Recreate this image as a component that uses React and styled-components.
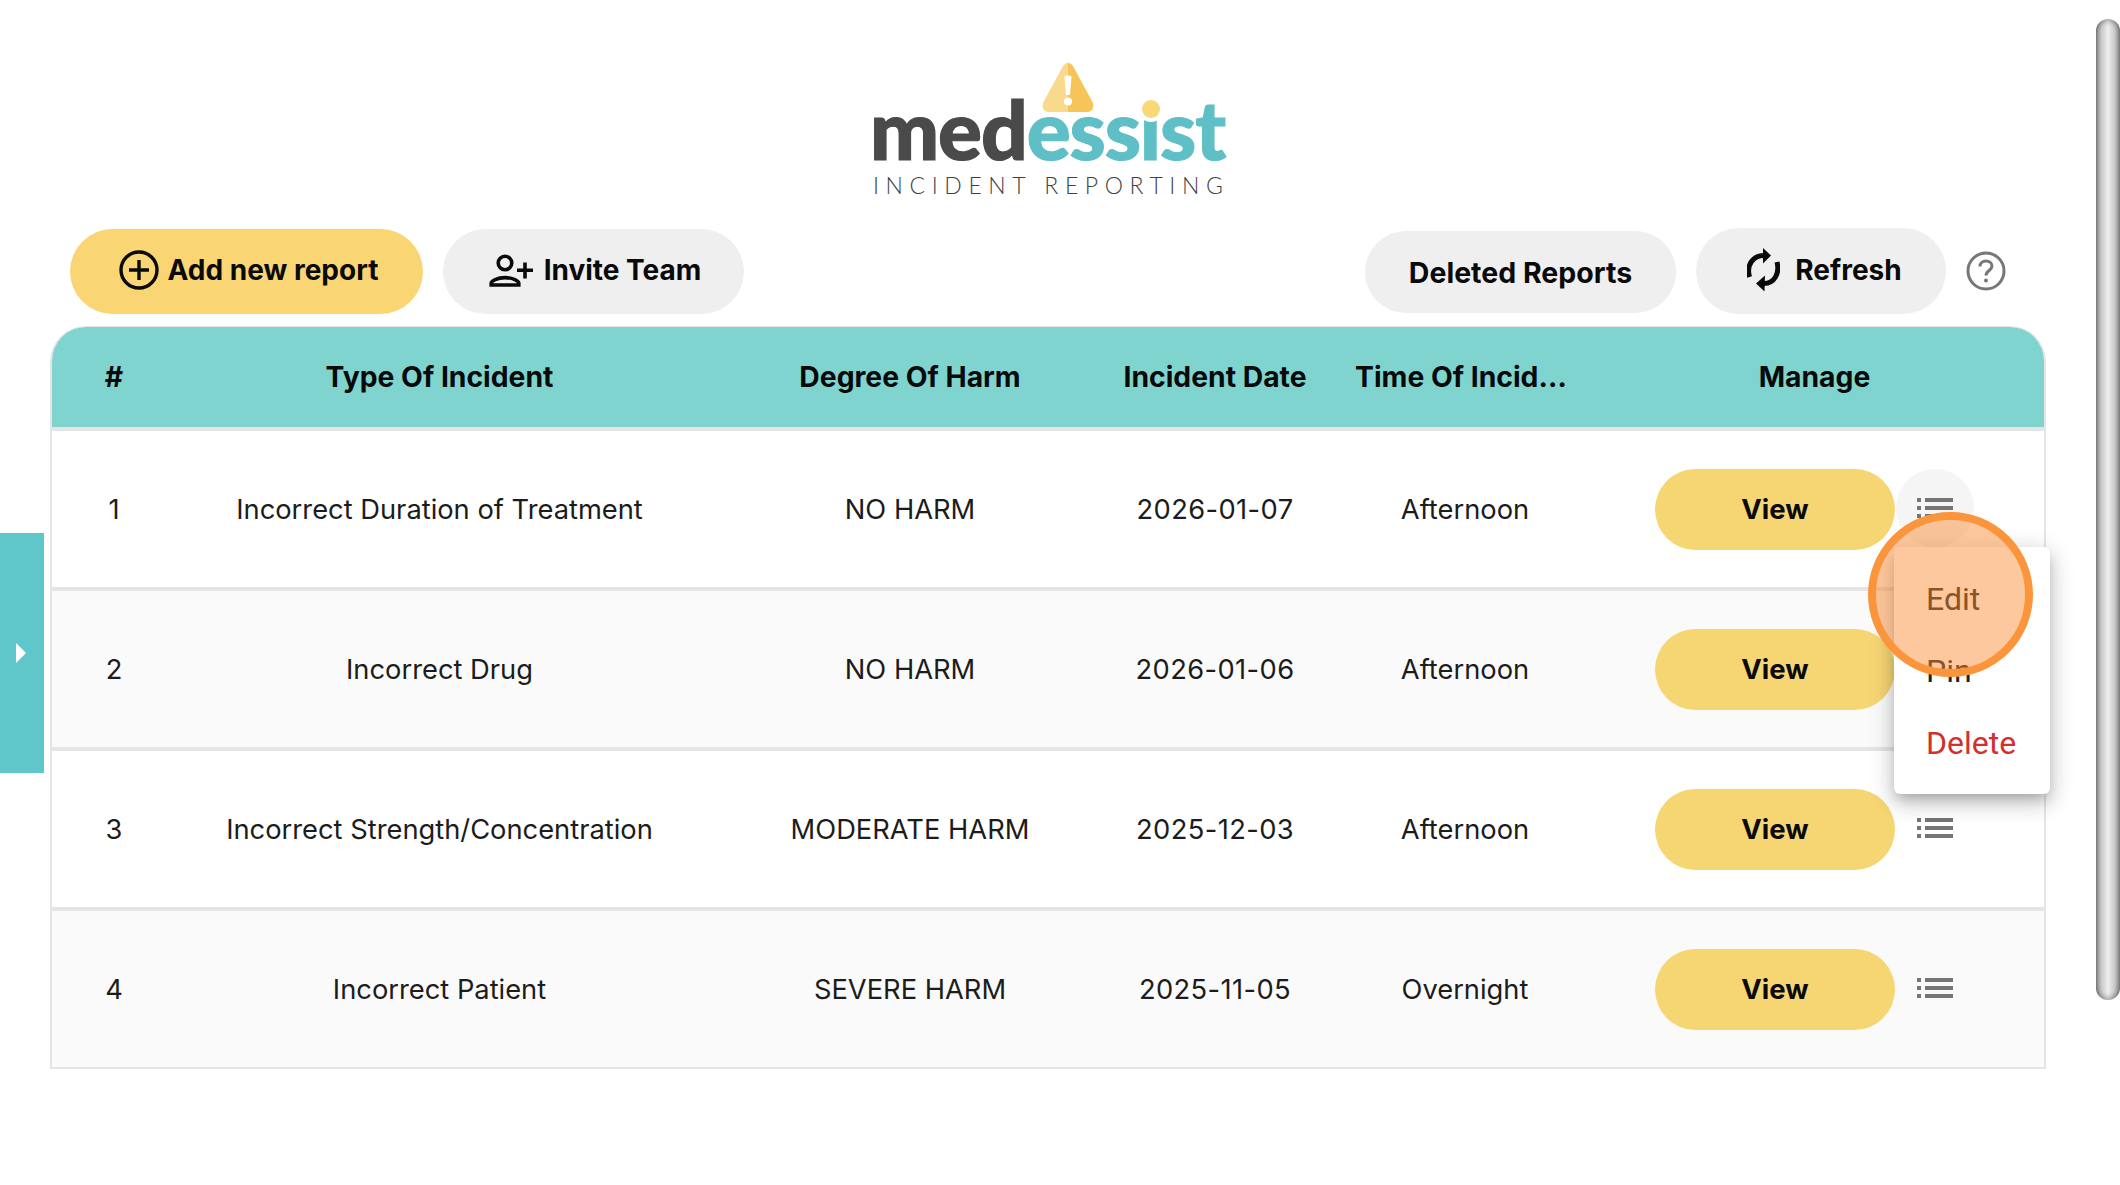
import React from "react";
import styled, { createGlobalStyle } from "styled-components";

const Global = createGlobalStyle`
  html, body { margin: 0; padding: 0; background: #fff; }
  body { font-family: Inter, "Liberation Sans", sans-serif; color: #111; overflow: hidden; }
  * { box-sizing: border-box; }
`;

const Page = styled.div`
  position: relative;
  width: 2120px;
  height: 1185px;
  overflow: hidden;
`;

const Header = styled.header`
  height: 228px;
  display: flex;
  justify-content: center;
  padding-top: 63px;
  padding-right: 22px;
`;

const Logo = styled.div`
  position: relative;
  width: 352px;
  height: 135px;
  display: flex;
  flex-direction: column;
  align-items: flex-start;
`;

const Wordmark = styled.div`
  margin: 22px 0 0 -3px;
  font-family: Lato, sans-serif;
  font-weight: 900;
  font-size: 82px;
  line-height: 86px;
  letter-spacing: -1.1px;
  white-space: nowrap;
  -webkit-text-stroke: 1.2px currentColor;
`;

const Dark = styled.span`
  color: #4a4a4a;
`;

const Teal = styled.span`
  color: #5fbfc6;
`;

const Tagline = styled.div`
  margin-top: 2px;
  font-family: Lato, sans-serif;
  font-weight: 300;
  font-size: 23px;
  line-height: 24px;
  letter-spacing: 6.6px;
  color: #3f3f3f;
  white-space: nowrap;
`;

const Mark = styled.svg`
  position: absolute;
  left: 169px;
  top: 0;
`;

const Dot = styled.span`
  position: absolute;
  left: 269px;
  top: 37px;
  width: 18px;
  height: 18px;
  border-radius: 50%;
  background: #f9d877;
  box-shadow: 0 0 0 4px #fff;
`;

const Toolbar = styled.div`
  height: 86px;
  margin-bottom: 12px;
  padding: 0 114px 0 70px;
  display: flex;
  align-items: center;
  justify-content: space-between;
`;

const Group = styled.div`
  display: flex;
  align-items: center;
  gap: 20px;
`;

const Pill = styled.button`
  height: ${(p) => p.$h || 85}px;
  width: ${(p) => p.$w}px;
  margin-top: ${(p) => p.$mt || 0}px;
  border: 0;
  border-radius: 43px;
  background: ${(p) => (p.$primary ? "#f9d673" : "#efefef")};
  color: #0a0a0a;
  font-family: Inter, sans-serif;
  font-weight: 700;
  font-size: ${(p) => p.$size || 28}px;
  display: flex;
  align-items: center;
  justify-content: center;
  gap: ${(p) => p.$gap || 8}px;
  padding: 0 0 ${(p) => p.$pb ?? 2}px ${(p) => p.$pl || 0}px;
`;

const Help = styled.svg`
  display: block;
`;

const Table = styled.div`
  width: 1996px;
  margin-left: 50px;
  border-left: 2px solid #e5e5e5;
  border-right: 2px solid #e5e5e5;
  border-bottom: 2px solid #e5e5e5;
  border-top: 1px solid #e5e5e5;
  border-radius: 36px 36px 0 0;
  background: #fff;
`;

const columns = "124px 527px 414px 196px 304px 1fr";

const HeadRow = styled.div`
  display: grid;
  grid-template-columns: ${columns};
  height: 104px;
  align-items: center;
  background: #7fd4cf;
  border-bottom: 4px solid #e5e5e5;
  border-radius: 34px 34px 0 0;
`;

const HeadCell = styled.div`
  font-weight: 700;
  font-size: 28.3px;
  color: #0a0a0a;
  text-align: center;
  white-space: nowrap;
  overflow: hidden;
  text-overflow: ellipsis;
  padding: 0 ${(p) => p.$pr || 0}px 0 ${(p) => p.$pl || 0}px;
`;

const Row = styled.div`
  display: grid;
  grid-template-columns: ${columns};
  height: ${(p) => (p.$last ? 156 : 160)}px;
  align-items: center;
  background: ${(p) => (p.$alt ? "#fafafa" : "#fff")};
  border-bottom: ${(p) => (p.$last ? "0" : "4px solid #e5e5e5")};
`;

const Cell = styled.div`
  font-size: 27.3px;
  font-weight: 400;
  letter-spacing: ${(p) => (p.$date ? "0.4px" : "0")};
  color: #1c1c1c;
  text-align: center;
  white-space: nowrap;
`;

const Manage = styled.div`
  display: flex;
  align-items: center;
  padding-left: 38px;
`;

const ViewButton = styled.button`
  width: 240px;
  height: 81px;
  border: 0;
  border-radius: 41px;
  background: #f6d673;
  color: #0a0a0a;
  font-family: Inter, sans-serif;
  font-weight: 700;
  font-size: 27.5px;
  padding: 0;
`;

const MenuButton = styled.button`
  width: 78px;
  height: 78px;
  margin: 0 0 3px 1px;
  border: 0;
  border-radius: 50%;
  background: ${(p) => (p.$active ? "#f5f5f5" : "transparent")};
  display: flex;
  align-items: center;
  justify-content: center;
  padding: 0;
`;

const Tab = styled.div`
  position: absolute;
  left: 0;
  top: 533px;
  width: 44px;
  height: 240px;
  background: #5fc6c9;
  display: flex;
  align-items: center;
  justify-content: center;
  padding-right: 3px;
`;

const TabArrow = styled.span`
  width: 0;
  height: 0;
  border-left: 10px solid #fff;
  border-top: 10px solid transparent;
  border-bottom: 10px solid transparent;
`;

const Scrollbar = styled.div`
  position: absolute;
  left: 2096px;
  top: 19px;
  width: 24px;
  height: 981px;
  border-radius: 12px;
  background: linear-gradient(90deg, #999 0%, #c8c8c8 22%, #efefef 50%, #c8c8c8 78%, #999 100%);
  box-shadow: inset 0 3px 5px rgba(0, 0, 0, 0.25), inset 0 -3px 5px rgba(0, 0, 0, 0.25);
`;

const Menu = styled.div`
  position: absolute;
  left: 1894px;
  top: 547px;
  width: 156px;
  height: 247px;
  background: #fff;
  border-radius: 6px;
  box-shadow: 0 7px 12px -4px rgba(0, 0, 0, 0.22), 0 10px 20px 2px rgba(0, 0, 0, 0.12), 0 4px 24px 4px rgba(0, 0, 0, 0.1);
  padding-top: 16px;
`;

const MenuItem = styled.div`
  height: 72px;
  padding-left: 32px;
  display: flex;
  align-items: center;
  font-family: Roboto, sans-serif;
  font-size: 32px;
  color: ${(p) => (p.$danger ? "#d32f2f" : "#212121")};
`;

const Highlight = styled.div`
  position: absolute;
  left: 1868px;
  top: 512px;
  width: 165px;
  height: 165px;
  border-radius: 50%;
  border: 8px solid #fa953c;
  background: rgba(251, 140, 50, 0.48);
`;

const PlusIcon = () => (
  <svg width="40" height="40" viewBox="0 0 40 40" fill="none" stroke="#0a0a0a" strokeWidth="3.4">
    <circle cx="20" cy="20" r="18" />
    <path d="M20 10v20M10 20h20" />
  </svg>
);

const InviteIcon = () => (
  <svg width="45" height="33" viewBox="9 8 45 33" fill="none" stroke="#0a0a0a" strokeWidth="3.6">
    <circle cx="25" cy="17" r="6.8" />
    <path d="M11.200 39v-1.800c0-2.200 6-5.600 13.800-5.600s13.800 3.400 13.800 5.600V39z" />
    <path d="M37 24.300h16M45 16.500v16" />
  </svg>
);

const RefreshIcon = () => (
  <svg width="33" height="44" viewBox="13 9 33 44" fill="none">
    <path d="M15.500 38C12 26 19 16.500 30 16.500" stroke="#0a0a0a" strokeWidth="5" />
    <path d="M29 9l8 7.500-8 8z" fill="#0a0a0a" />
    <path d="M43 23C46 35 40 44.500 30 44.500" stroke="#0a0a0a" strokeWidth="5" />
    <path d="M31 36.500l-9 8 8.500 8z" fill="#0a0a0a" />
  </svg>
);

const HelpIcon = () => (
  <Help width="40" height="40" viewBox="0 0 40 40" fill="none">
    <circle cx="20" cy="20" r="18" stroke="#777" strokeWidth="3" />
    <path d="M14 15.500c0-3.500 2.800-5.500 6-5.500s6 2 6 5c0 4.500-6 4.500-6 9.500" stroke="#777" strokeWidth="3" />
    <circle cx="20" cy="29.500" r="2" fill="#777" />
  </Help>
);

const ListIcon = () => (
  <svg width="36" height="20" viewBox="0 0 36 20" fill="#757575">
    <rect x="0" y="0" width="4" height="4" />
    <rect x="8" y="0" width="28" height="4" />
    <rect x="0" y="8" width="4" height="4" />
    <rect x="8" y="8" width="28" height="4" />
    <rect x="0" y="16" width="4" height="4" />
    <rect x="8" y="16" width="28" height="4" />
  </svg>
);

const rows = [
  ["1", "Incorrect Duration of Treatment", "NO HARM", "2026-01-07", "Afternoon"],
  ["2", "Incorrect Drug", "NO HARM", "2026-01-06", "Afternoon"],
  ["3", "Incorrect Strength/Concentration", "MODERATE HARM", "2025-12-03", "Afternoon"],
  ["4", "Incorrect Patient", "SEVERE HARM", "2025-11-05", "Overnight"],
];

export default function App() {
  return (
    <Page>
      <Global />
      <Header>
        <Logo>
          <Wordmark>
            <Dark>med</Dark>
            <Teal>essist</Teal>
          </Wordmark>
          <Tagline>INCIDENT REPORTING</Tagline>
          <Mark width="52" height="50" viewBox="0 0 52 50">
            <path d="M26 0c2.500 0 4 1.500 5.500 4L50 38c3 5 1 11-5 11H26z" fill="#f7c557" />
            <path d="M26 0c-2.500 0-4 1.500-5.500 4L2 38c-3 5-1 11 5 11h19z" fill="#f9d98c" />
            <path d="M22.500 14c0-2 7-2 7 0l-1.500 18h-4z" fill="#fff" />
            <circle cx="26" cy="38.500" r="4" fill="#fff" />
          </Mark>
          <Dot />
        </Logo>
      </Header>

      <Toolbar>
        <Group>
          <Pill $primary $w={353} $gap={9} $pl={4}>
            <PlusIcon />
            Add new report
          </Pill>
          <Pill $w={301} $gap={10} $pl={3}>
            <InviteIcon />
            Invite Team
          </Pill>
        </Group>
        <Group>
          <Pill $w={311} $h={82} $mt={2} $size={28.5} $pb={0}>Deleted Reports</Pill>
          <Pill $w={250} $h={86} $gap={15} $pl={7}>
            <RefreshIcon />
            Refresh
          </Pill>
          <HelpIcon />
        </Group>
      </Toolbar>

      <Table>
        <HeadRow>
          <HeadCell>#</HeadCell>
          <HeadCell>Type Of Incident</HeadCell>
          <HeadCell>Degree Of Harm</HeadCell>
          <HeadCell>Incident Date</HeadCell>
          <HeadCell $pl={42} $pr={46}>Time Of Incident</HeadCell>
          <HeadCell $pr={32}>Manage</HeadCell>
        </HeadRow>
        {rows.map((r, i) => (
          <Row key={r[0]} $alt={i % 2 === 1} $last={i === rows.length - 1}>
            {r.map((c, j) => (
              <Cell key={j} $date={j === 3}>{c}</Cell>
            ))}
            <Manage>
              <ViewButton>View</ViewButton>
              <MenuButton $active={i === 0}>
                <ListIcon />
              </MenuButton>
            </Manage>
          </Row>
        ))}
      </Table>

      <Tab>
        <TabArrow />
      </Tab>
      <Scrollbar />
      <Menu>
        <MenuItem>Edit</MenuItem>
        <MenuItem>Pin</MenuItem>
        <MenuItem $danger>Delete</MenuItem>
      </Menu>
      <Highlight />
    </Page>
  );
}
